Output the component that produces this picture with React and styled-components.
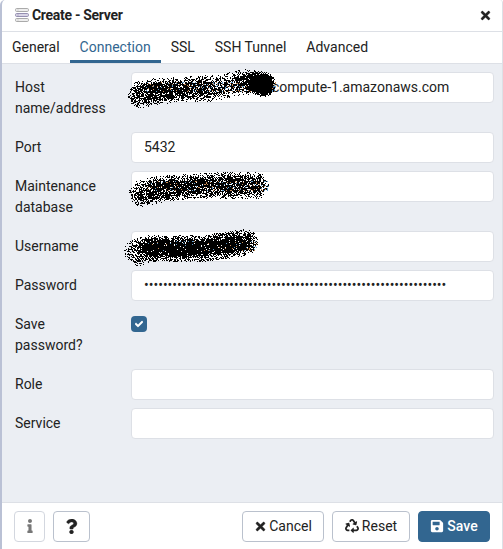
import React from "react";
import styled, { createGlobalStyle, css } from "styled-components";
import { FaCheck, FaInfo, FaQuestion, FaRecycle, FaSave, FaTimes } from "react-icons/fa";

const GlobalStyle = createGlobalStyle`
  *, *::before, *::after { box-sizing: border-box; }
  body {
    margin: 0;
    background: #fff;
    color: #222;
    font: 400 14px/21px Roboto, "Liberation Sans", sans-serif;
    overflow: hidden;
  }
`;

const Dialog = styled.div`
  display: flex;
  flex-direction: column;
  width: 503px;
  height: 549px;
  background: #fff;
  border-left: 2px solid #bac1d5;
  border-right: 1px solid #dde0e6;
  border-top-left-radius: 5px;
  border-top-right-radius: 3px;
`;

const Header = styled.header`
  display: flex;
  align-items: center;
  flex: none;
  height: 32px;
  padding: 0 10px 1px 12px;
  border-bottom: 1px solid #dde0e6;
`;

const Title = styled.h1`
  flex: 1;
  margin: 0 0 0 2px;
  font-size: 14px;
  font-weight: 700;
  line-height: 21px;
  letter-spacing: -0.3px;
`;

const CloseButton = styled.button`
  display: flex;
  padding: 0;
  border: 0;
  background: none;
  color: #222;
`;

const Tabs = styled.nav`
  display: flex;
  flex: none;
  height: 32px;
  border-bottom: 1px solid #dde0e6;
`;

const Tab = styled.button`
  height: 31px;
  padding: 2px 10px 0;
  border: 0;
  border-bottom: 3px solid ${(p) => (p.$active ? "#326690" : "transparent")};
  background: none;
  color: ${(p) => (p.$active ? "#326690" : "#222")};
  font: inherit;
`;

const Form = styled.main`
  flex: 1;
  padding: 4px 8px 0 13px;
  background: #ebeef3;
`;

const Row = styled.div`
  display: grid;
  grid-template-columns: 116px 363px;
  align-items: start;
  padding: 4px 0;
`;

const Label = styled.label`
  width: 98px;
  padding: 5px 0;
`;

const Field = styled.div`
  position: relative;
  height: 31px;
`;

const Input = styled.div`
  height: 31px;
  padding: 4px 12px 4px ${(p) => p.$indent || 12}px;
  border: 1px solid #dde0e6;
  border-radius: 4px;
  background: #fff;
  white-space: nowrap;
`;

const Checkbox = styled.div`
  display: flex;
  align-items: center;
  justify-content: center;
  width: 16px;
  height: 16px;
  margin-top: 7px;
  border-radius: 4px;
  background: #326690;
  color: #fff;
`;

const ScribbleLayer = styled.svg`
  position: absolute;
  left: -11px;
  top: -6px;
  pointer-events: none;
`;

const Footer = styled.footer`
  display: flex;
  flex: none;
  height: 47px;
  padding: 8px 12px;
  gap: 8px;
  border-top: 1px solid #dde0e6;
`;

const Spacer = styled.div`
  flex: 1;
`;

const Button = styled.button`
  display: flex;
  align-items: center;
  justify-content: center;
  gap: ${(p) => p.$gap || 0}px;
  width: ${(p) => p.$width}px;
  height: 31px;
  padding: 0 0 1px;
  border: 1px solid #bac1cd;
  border-radius: 4px;
  background: #fff;
  color: #222;
  font: inherit;
  ${(p) => p.$muted && css`
    border-color: #d3d7df;
    color: #777;
  `}
  ${(p) => p.$primary && css`
    border-color: #326690;
    background: #326690;
    color: #fff;
    font-weight: 500;
  `}
`;

// Stroke points are [x, y, radius, density] inside the 160 x 42 scribble layer.
const HOST = [[21, 28, 13, 0.68], [35, 25, 13, 0.84], [62, 23, 12, 0.78], [90, 22, 13, 0.66], [110, 18, 12, 0.52], [125, 15, 12, 0.8], [138, 17, 12, 1.25], [143, 18, 12, 1.5]];
const DATABASE = [[22, 28, 13, 0.65], [38, 24, 13, 0.82], [70, 21, 12, 0.82], [104, 20, 13, 0.78], [135, 20, 13, 0.68]];
const USERNAME = [[17, 27, 13, 0.58], [29, 23, 13, 0.92], [55, 23, 13, 0.95], [82, 23, 13, 0.9], [106, 20, 13, 0.95], [124, 17, 13, 0.84]];

function spray(points, seed) {
  // xorshift generator keeps the grain identical on every render.
  let state = seed;
  const random = () => {
    state ^= state << 13;
    state ^= state >>> 17;
    state ^= state << 5;
    return (state >>> 0) / 4294967296;
  };
  let black = "";
  let orange = "";
  let blue = "";
  for (let y = 0; y < 42; y++) {
    for (let x = 0; x < 160; x++) {
      let coverage = 0;
      for (let i = 1; i < points.length; i++) {
        const [ax, ay, ar, ad] = points[i - 1];
        const [bx, by, br, bd] = points[i];
        const dx = bx - ax;
        const dy = by - ay;
        const t = Math.max(0, Math.min(1, ((x - ax) * dx + (y - ay) * dy) / (dx * dx + dy * dy)));
        const distance = Math.hypot(x - ax - t * dx, y - ay - t * dy) / (ar + t * (br - ar));
        const density = ad + t * (bd - ad);
        if (distance < 1.04) coverage = Math.max(coverage, density * Math.min(1, 0.25 + (1.04 - distance) * 1.35));
      }
      const hit = random();
      const tint = random();
      const dot = `M${x} ${y}h1v1h-1z`;
      if (hit < coverage) black += dot;
      else if (coverage > 0 && x > 25 && y > 15 && y < 26 && tint < 0.42) {
        if (tint < 0.21) orange += dot;
        else blue += dot;
      }
    }
  }
  return { black, orange, blue };
}

function Scribble({ points, seed }) {
  const dots = spray(points, seed);
  return (
    <ScribbleLayer width="160" height="42" viewBox="0 0 160 42" shapeRendering="crispEdges" aria-hidden="true">
      <path d={dots.orange} fill="#c98d59" />
      <path d={dots.blue} fill="#5f9bca" />
      <path d={dots.black} fill="#000" />
    </ScribbleLayer>
  );
}

function ServerIcon() {
  return (
    <svg width="16" height="16" viewBox="0 0 16 16" aria-hidden="true">
      {[1.5, 6.5, 11.5].map((y, i) => (
        <g key={y}>
          <rect x="1.5" y={y} width="13" height="3" rx="1.2" fill={i === 1 ? "#d9d5e6" : "#eeeeee"} stroke={i === 1 ? "#9690b2" : "#aaa"} />
          <path d={`M3.5 ${y + 1.5}h1`} stroke={i === 1 ? "#8e88ad" : "#bbb"} />
        </g>
      ))}
    </svg>
  );
}

function FormRow({ label, children }) {
  return (
    <Row>
      <Label>{label}</Label>
      <Field>{children}</Field>
    </Row>
  );
}

export default function App() {
  return (
    <>
      <GlobalStyle />
      <Dialog>
        <Header>
          <ServerIcon />
          <Title>Create - Server</Title>
          <CloseButton aria-label="Close"><FaTimes size={13} stroke="currentColor" strokeWidth={12} /></CloseButton>
        </Header>
        <Tabs>
          <Tab>General</Tab>
          <Tab $active>Connection</Tab>
          <Tab>SSL</Tab>
          <Tab>SSH Tunnel</Tab>
          <Tab>Advanced</Tab>
        </Tabs>
        <Form>
          <FormRow label="Host name/address">
            <Input $indent={140}>compute-1.amazonaws.com</Input>
            <Scribble points={HOST} seed={7100173} />
          </FormRow>
          <FormRow label="Port"><Input>5432</Input></FormRow>
          <FormRow label="Maintenance database">
            <Input />
            <Scribble points={DATABASE} seed={91300757} />
          </FormRow>
          <FormRow label="Username">
            <Input />
            <Scribble points={USERNAME} seed={40210991} />
          </FormRow>
          <FormRow label="Password"><Input>{"•".repeat(64)}</Input></FormRow>
          <FormRow label="Save password?">
            <Checkbox role="checkbox" aria-checked="true"><FaCheck size={8} stroke="currentColor" strokeWidth={50} /></Checkbox>
          </FormRow>
          <FormRow label="Role"><Input /></FormRow>
          <FormRow label="Service"><Input /></FormRow>
        </Form>
        <Footer>
          <Button $width={31} $muted aria-label="Information"><FaInfo size={14} /></Button>
          <Button $width={37} aria-label="Help"><FaQuestion size={15} stroke="currentColor" strokeWidth={12} /></Button>
          <Spacer />
          <Button $width={82} $gap={2}><FaTimes size={13} stroke="currentColor" strokeWidth={16} />Cancel</Button>
          <Button $width={78} $gap={3}><FaRecycle size={14} />Reset</Button>
          <Button $width={72} $gap={3} $primary><FaSave size={14} />Save</Button>
        </Footer>
      </Dialog>
    </>
  );
}
